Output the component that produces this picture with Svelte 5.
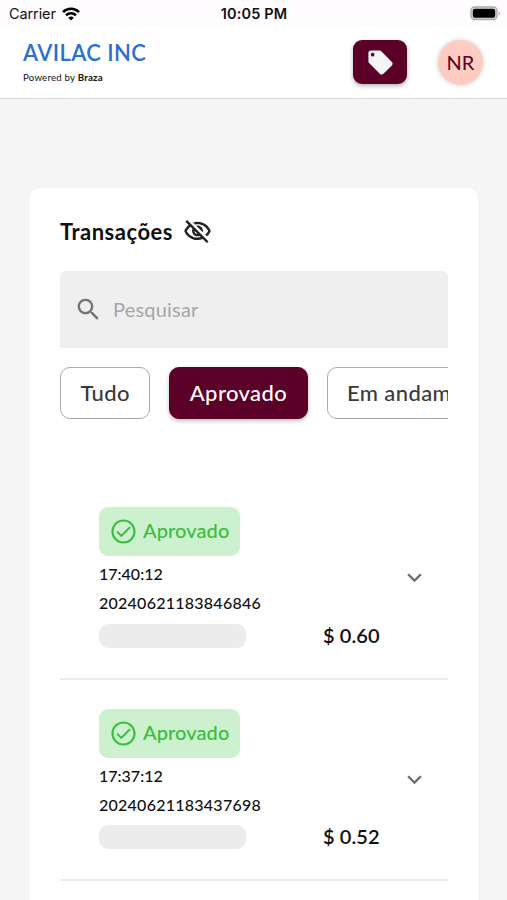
<script lang="ts">
	type Transaction = { time: string; id: string; amount: string };

	const filters = ['Tudo', 'Aprovado', 'Em andamento'];
	let activeFilter = $state('Aprovado');
	let search = $state('');
	let showValues = $state(false);

	const transactions: Transaction[] = [
		{ time: '17:40:12', id: '20240621183846846', amount: '$ 0.60' },
		{ time: '17:37:12', id: '20240621183437698', amount: '$ 0.52' }
	];
</script>

<div class="screen">
	<div class="status-bar">
		<div class="carrier">
			<span>Carrier</span>
			<svg width="18" height="14" viewBox="0 0 18 14" fill="none" stroke="#000" stroke-width="2.6">
				<path d="M1 5.1a11.3 11.3 0 0 1 16 0" />
				<path d="M4 8.3a7.1 7.1 0 0 1 10 0" />
				<path d="M9 13.6 6.2 10.8a4 4 0 0 1 5.6 0z" fill="#000" stroke="none" />
			</svg>
		</div>
		<span class="clock">10:05 PM</span>
		<svg class="battery" width="31" height="15" viewBox="0 0 31 15">
			<rect x="1" y="1" width="26" height="12.5" rx="3.7" fill="#ddd" stroke="#a9a9a9" stroke-width="1.3" />
			<rect x="2.8" y="2.7" width="22.4" height="9.1" rx="2" />
			<path d="M28.6 5.2c1.9.8 1.9 3.4 0 4.2z" fill="#a9a9a9" />
		</svg>
	</div>

	<header>
		<div class="brand">
			<h1>AVILAC INC</h1>
			<p>Powered by <b>Braza</b></p>
		</div>
		<button class="tag-button" aria-label="Ofertas">
			<svg class="icon" viewBox="0 0 24 24">
				<path
					d="m21.41 11.58-9-9C12.05 2.22 11.55 2 11 2H4c-1.1 0-2 .9-2 2v7c0 .55.22 1.05.59 1.42l9 9c.36.36.86.58 1.41.58s1.05-.22 1.41-.59l7-7c.37-.36.59-.86.59-1.41s-.23-1.06-.59-1.42M5.5 7C4.67 7 4 6.33 4 5.5S4.67 4 5.5 4 7 4.67 7 5.5 6.33 7 5.5 7"
				/>
			</svg>
		</button>
		<div class="avatar">NR</div>
	</header>

	<main>
		<div class="title">
			<h2>Transações</h2>
			<button class="eye" aria-label="Mostrar valores" onclick={() => (showValues = !showValues)}>
				<svg class="icon" viewBox="0 0 24 24">
					<path
						d="M12 6c3.79 0 7.17 2.13 8.82 5.5-.59 1.22-1.42 2.27-2.41 3.12l1.41 1.41c1.39-1.23 2.49-2.77 3.18-4.53C21.27 7.11 17 4 12 4c-1.27 0-2.49.2-3.64.57l1.65 1.65C10.66 6.09 11.32 6 12 6m-1.07 1.14L13 9.21c.57.25 1.03.71 1.28 1.28l2.07 2.07c.08-.34.14-.7.14-1.07C16.5 9.01 14.48 7 12 7c-.37 0-.72.05-1.07.14M2.01 3.87l2.68 2.68C3.06 7.83 1.77 9.53 1 11.5 2.73 15.89 7 19 12 19c1.52 0 2.98-.29 4.32-.82l3.42 3.42 1.41-1.41L3.42 2.45zm7.5 7.5 2.61 2.61c-.04.01-.08.02-.12.02-1.38 0-2.5-1.12-2.5-2.5 0-.05.01-.08.01-.13m-3.4-3.4 1.75 1.75c-.23.55-.36 1.15-.36 1.78 0 2.48 2.02 4.5 4.5 4.5.63 0 1.23-.13 1.77-.36l.98.98c-.88.24-1.8.38-2.75.38-3.79 0-7.17-2.13-8.82-5.5.7-1.43 1.72-2.61 2.93-3.53"
					/>
				</svg>
			</button>
		</div>

		<label class="search">
			<svg class="icon" viewBox="0 0 24 24">
				<path
					d="M15.5 14h-.79l-.28-.27C15.41 12.59 16 11.11 16 9.5 16 5.91 13.09 3 9.5 3S3 5.91 3 9.5 5.91 16 9.5 16c1.61 0 3.09-.59 4.23-1.57l.27.28v.79l5 4.99L20.49 19zm-6 0C7.01 14 5 11.99 5 9.5S7.01 5 9.5 5 14 7.01 14 9.5 11.99 14 9.5 14"
				/>
			</svg>
			<input type="text" placeholder="Pesquisar" bind:value={search} />
		</label>

		<div class="filters">
			{#each filters as filter}
				<button
					class="chip"
					class:active={activeFilter === filter}
					onclick={() => (activeFilter = filter)}>{filter}</button
				>
			{/each}
		</div>

		<div class="list">
			{#each transactions as item}
				<article>
					<div class="badge">
						<svg class="icon" viewBox="0 0 24 24">
							<path
								d="M12 2C6.48 2 2 6.48 2 12s4.48 10 10 10 10-4.48 10-10S17.52 2 12 2m0 18.2c-4.52 0-8.2-3.68-8.2-8.2S7.48 3.8 12 3.8s8.2 3.68 8.2 8.2-3.68 8.2-8.2 8.2m4.9-12.4L10.2 14.5l-3-3-1.15 1.15 4.15 4.15L18.05 8.95z"
							/>
						</svg>
						<span>Aprovado</span>
					</div>
					<p class="time">{item.time}</p>
					<p class="id">{item.id}</p>
					<div class="bottom">
						<div class="skeleton"></div>
						<span class="amount">{item.amount}</span>
					</div>
					<svg class="icon expand" viewBox="0 0 24 24">
						<path d="M16.59 8.59 12 13.17 7.41 8.59 6 10l6 6 6-6z" />
					</svg>
				</article>
			{/each}
		</div>
	</main>
</div>

<style>
	:global(body) {
		margin: 0;
		overflow: hidden;
	}

	.screen {
		box-sizing: border-box;
		height: 900px;
		overflow: hidden;
		background: #f5f5f5;
		color: #111;
		font-family: Lato, 'Open Sans', sans-serif;
	}
	.screen :is(h1, h2, p) {
		margin: 0;
	}
	button {
		border: 0;
		padding: 0;
		font: inherit;
	}
	.icon {
		display: block;
		flex: none;
		width: 29px;
		height: 29px;
		fill: currentColor;
	}

	.status-bar {
		display: grid;
		grid-template-columns: 1fr auto 1fr;
		align-items: center;
		height: 27px;
		padding: 0 6px 0 9px;
		background: #fffcff;
		color: #111;
		font: 14.5px/27px Inter, sans-serif;
	}
	.carrier {
		display: flex;
		align-items: center;
		gap: 6px;
		letter-spacing: -0.1px;
	}
	.clock {
		padding-right: 2px;
		font-weight: 600;
		letter-spacing: 0.15px;
	}
	.battery {
		justify-self: end;
	}

	header {
		display: flex;
		align-items: center;
		box-sizing: border-box;
		height: 72px;
		padding: 0 24px 1px 23px;
		border-bottom: 1px solid #dcdcdc;
		background: #fff;
	}
	.brand {
		flex: 1;
		padding-bottom: 3px;
	}
	h1 {
		color: #2b6fd0;
		font-size: 22px;
		font-weight: 600;
		line-height: 30px;
		letter-spacing: 0.4px;
	}
	.brand p {
		margin-top: 2px;
		font-size: 9.7px;
		line-height: 14px;
		letter-spacing: 0.2px;
	}
	.tag-button {
		display: grid;
		place-items: center;
		width: 54px;
		height: 44px;
		border-radius: 9px;
		background: #5b0028;
		color: #f5f5f7;
		box-shadow: 0 2px 4px rgba(0, 0, 0, 0.3);
	}
	.avatar {
		width: 45px;
		height: 45px;
		margin-left: 31px;
		border-radius: 50%;
		background: #ffccc2;
		color: #5b0028;
		font-size: 20px;
		line-height: 44px;
		text-align: center;
		box-shadow: 0 0 5px rgba(0, 0, 0, 0.2);
	}

	main {
		box-sizing: border-box;
		height: 740px;
		margin: 89px 29px 0 30px;
		padding: 29px 30px 0;
		border-radius: 10px;
		background: #fff;
	}
	.title {
		display: flex;
		align-items: center;
		gap: 10px;
		height: 29px;
	}
	h2 {
		font-size: 22px;
		font-weight: 700;
		letter-spacing: 0.5px;
	}
	.eye {
		background: none;
		color: #222;
	}

	.search {
		display: flex;
		align-items: center;
		gap: 10px;
		box-sizing: border-box;
		height: 77px;
		margin-top: 25px;
		padding: 0 14px;
		border-radius: 5px 5px 0 0;
		background: #efefef;
		color: #757575;
	}
	input {
		flex: 1;
		min-width: 0;
		padding: 0 0 2px;
		border: 0;
		outline: 0;
		background: none;
		color: #222;
		font: 20px Lato, sans-serif;
		letter-spacing: 0.2px;
	}
	input::placeholder {
		color: #a6a6a6;
		opacity: 1;
	}

	/* left bleed keeps the chip shadow from being clipped */
	.filters {
		display: flex;
		gap: 19px;
		margin: 0 0 0 -6px;
		padding: 19px 0 8px 6px;
		overflow: hidden;
	}
	.chip {
		flex: none;
		box-sizing: border-box;
		height: 52px;
		padding: 0 19.4px 2px;
		border: 1.5px solid #aaa;
		border-radius: 10px;
		background: #fff;
		color: #3a3a3a;
		font-size: 22px;
		font-weight: 500;
		letter-spacing: 0.4px;
	}
	.chip.active {
		border-color: #5b0028;
		background: #5b0028;
		color: #fff;
		box-shadow: 0 2px 4px rgba(0, 0, 0, 0.25);
	}

	.list {
		margin-top: 51px;
	}
	article {
		position: relative;
		box-sizing: border-box;
		height: 201.5px;
		padding: 29px 39px 0;
		border-bottom: 2px solid #ebebeb;
	}
	.badge {
		display: flex;
		align-items: center;
		gap: 5.5px;
		box-sizing: border-box;
		width: 141px;
		height: 49px;
		padding-left: 9.5px;
		border-radius: 9px;
		background: #cdf1ce;
		color: #36bf3b;
		font-size: 20px;
		font-weight: 500;
	}
	.badge span {
		padding-bottom: 3px;
		letter-spacing: 0.1px;
	}
	.time,
	.id {
		font-size: 16px;
		font-weight: 500;
		line-height: 29px;
	}
	.time {
		padding-top: 3.4px;
	}
	.id {
		letter-spacing: 0.25px;
	}
	.bottom {
		display: flex;
		align-items: center;
		gap: 77px;
		height: 30px;
		margin-top: 3.6px;
	}
	.skeleton {
		width: 147px;
		height: 24px;
		border-radius: 9px;
		background: #ececec;
	}
	.amount {
		padding-bottom: 2px;
		font-size: 20px;
		font-weight: 600;
		letter-spacing: 0.1px;
		white-space: nowrap;
	}
	.expand {
		position: absolute;
		top: 85px;
		right: 19.5px;
		color: #6e6e6e;
	}
</style>
